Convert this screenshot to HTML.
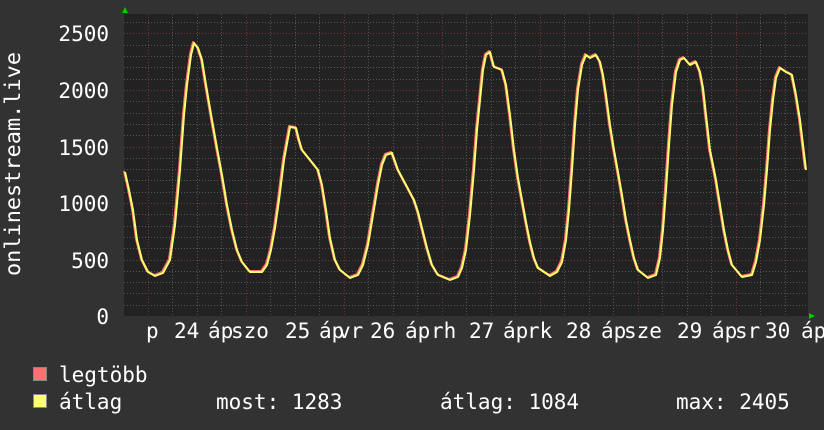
<!DOCTYPE html>
<html><head><meta charset="utf-8"><style>
html,body{margin:0;padding:0;background:#333;}
svg{display:block;}
text{font-family:"DejaVu Sans Mono","Liberation Mono",monospace;fill:#fff;font-size:21px;}
</style></head><body>
<svg width="824" height="430" viewBox="0 0 824 430" xmlns="http://www.w3.org/2000/svg">
<rect x="0" y="0" width="824" height="430" fill="#323232"/>
<rect x="124" y="14" width="684" height="302" fill="#222"/>
<g stroke="#555" stroke-width="1" stroke-dasharray="1,2">
<line x1="124" y1="22.5" x2="808" y2="22.5"/><line x1="124" y1="45.5" x2="808" y2="45.5"/><line x1="124" y1="56.5" x2="808" y2="56.5"/><line x1="124" y1="67.5" x2="808" y2="67.5"/><line x1="124" y1="79.5" x2="808" y2="79.5"/>
<line x1="124" y1="101.5" x2="808" y2="101.5"/><line x1="124" y1="113.5" x2="808" y2="113.5"/><line x1="124" y1="124.5" x2="808" y2="124.5"/><line x1="124" y1="135.5" x2="808" y2="135.5"/>
<line x1="124" y1="158.5" x2="808" y2="158.5"/><line x1="124" y1="169.5" x2="808" y2="169.5"/><line x1="124" y1="180.5" x2="808" y2="180.5"/><line x1="124" y1="192.5" x2="808" y2="192.5"/>
<line x1="124" y1="214.5" x2="808" y2="214.5"/><line x1="124" y1="226.5" x2="808" y2="226.5"/><line x1="124" y1="237.5" x2="808" y2="237.5"/><line x1="124" y1="248.5" x2="808" y2="248.5"/>
<line x1="124" y1="271.5" x2="808" y2="271.5"/><line x1="124" y1="282.5" x2="808" y2="282.5"/><line x1="124" y1="293.5" x2="808" y2="293.5"/><line x1="124" y1="305.5" x2="808" y2="305.5"/>
<line x1="172.5" y1="14" x2="172.5" y2="316"/><line x1="197.5" y1="14" x2="197.5" y2="316"/><line x1="221.5" y1="14" x2="221.5" y2="316"/>
<line x1="270.5" y1="14" x2="270.5" y2="316"/><line x1="295.5" y1="14" x2="295.5" y2="316"/><line x1="319.5" y1="14" x2="319.5" y2="316"/>
<line x1="368.5" y1="14" x2="368.5" y2="316"/><line x1="393.5" y1="14" x2="393.5" y2="316"/><line x1="417.5" y1="14" x2="417.5" y2="316"/>
<line x1="466.5" y1="14" x2="466.5" y2="316"/><line x1="491.5" y1="14" x2="491.5" y2="316"/><line x1="515.5" y1="14" x2="515.5" y2="316"/>
<line x1="564.5" y1="14" x2="564.5" y2="316"/><line x1="589.5" y1="14" x2="589.5" y2="316"/><line x1="613.5" y1="14" x2="613.5" y2="316"/>
<line x1="662.5" y1="14" x2="662.5" y2="316"/><line x1="687.5" y1="14" x2="687.5" y2="316"/><line x1="711.5" y1="14" x2="711.5" y2="316"/>
<line x1="760.5" y1="14" x2="760.5" y2="316"/><line x1="785.5" y1="14" x2="785.5" y2="316"/>
</g>
<g stroke="#7a3333" stroke-width="1" stroke-dasharray="1,2">
<line x1="124" y1="33.5" x2="808" y2="33.5"/><line x1="124" y1="90.5" x2="808" y2="90.5"/><line x1="124" y1="147.5" x2="808" y2="147.5"/><line x1="124" y1="203.5" x2="808" y2="203.5"/><line x1="124" y1="260.5" x2="808" y2="260.5"/>
<line x1="148.5" y1="14" x2="148.5" y2="316"/><line x1="246.5" y1="14" x2="246.5" y2="316"/><line x1="344.5" y1="14" x2="344.5" y2="316"/><line x1="442.5" y1="14" x2="442.5" y2="316"/><line x1="540.5" y1="14" x2="540.5" y2="316"/><line x1="638.5" y1="14" x2="638.5" y2="316"/><line x1="736.5" y1="14" x2="736.5" y2="316"/>
</g>
<polygon points="122,13 128,13 125,7" fill="#0c0"/>
<polygon points="809,313 809,319 815,316" fill="#0c0"/>
<g fill="none" stroke-linejoin="round">
<polyline stroke="#ff7070" stroke-width="2" transform="translate(-1,-1)" points="125,172 129,190 133,210 137,240 142,260 148,272 155,276 163,273 170,260 175,225 180,170 184,115 187,85 191,55 194,43 198,48 202,60 206,85 212,120 217,148 222,175 227,205 232,230 237,250 242,262 250,272 262,272 267,265 271,250 275,228 279,200 284,160 290,127 296,128 299,140 302,150 310,160 318,170 322,185 326,210 330,238 335,260 340,270 350,278 358,275 363,265 368,245 373,215 378,185 382,165 386,155 392,153 398,170 406,185 414,200 418,212 422,228 427,248 432,265 438,275 450,280 458,277 462,268 466,250 470,215 474,170 477,130 480,100 483,70 486,55 490,52 494,67 502,70 506,85 510,115 514,150 518,178 522,200 526,222 530,242 534,258 538,268 550,276 557,272 562,262 566,240 569,210 572,170 575,125 578,90 582,65 586,55 590,58 596,55 600,62 603,75 606,95 610,125 614,150 618,172 622,195 626,220 630,240 634,258 638,270 648,278 656,275 660,258 663,230 666,190 669,145 672,105 676,72 680,60 684,58 690,65 696,62 700,72 703,88 706,115 710,150 716,180 720,205 724,230 728,250 732,265 742,277 752,275 756,262 760,240 764,205 767,170 770,130 773,100 776,78 780,68 786,72 792,75 796,95 800,120 803,145 806,170"/>
<polyline stroke="#ffff70" stroke-width="2" points="125,172 129,190 133,210 137,240 142,260 148,272 155,276 163,273 170,260 175,225 180,170 184,115 187,85 191,55 194,43 198,48 202,60 206,85 212,120 217,148 222,175 227,205 232,230 237,250 242,262 250,272 262,272 267,265 271,250 275,228 279,200 284,160 290,127 296,128 299,140 302,150 310,160 318,170 322,185 326,210 330,238 335,260 340,270 350,278 358,275 363,265 368,245 373,215 378,185 382,165 386,155 392,153 398,170 406,185 414,200 418,212 422,228 427,248 432,265 438,275 450,280 458,277 462,268 466,250 470,215 474,170 477,130 480,100 483,70 486,55 490,52 494,67 502,70 506,85 510,115 514,150 518,178 522,200 526,222 530,242 534,258 538,268 550,276 557,272 562,262 566,240 569,210 572,170 575,125 578,90 582,65 586,55 590,58 596,55 600,62 603,75 606,95 610,125 614,150 618,172 622,195 626,220 630,240 634,258 638,270 648,278 656,275 660,258 663,230 666,190 669,145 672,105 676,72 680,60 684,58 690,65 696,62 700,72 703,88 706,115 710,150 716,180 720,205 724,230 728,250 732,265 742,277 752,275 756,262 760,240 764,205 767,170 770,130 773,100 776,78 780,68 786,72 792,75 796,95 800,120 803,145 806,170"/>
</g>
<g text-anchor="end">
<text x="109" y="41">2500</text><text x="109" y="98">2000</text><text x="109" y="155">1500</text><text x="109" y="211">1000</text><text x="109" y="268">500</text><text x="109" y="324">0</text>
</g>
<text transform="translate(20,276) rotate(-90)" textLength="224" lengthAdjust="spacingAndGlyphs">onlinestream.live</text>
<g>
<text x="146" y="338">p</text><text x="174" y="338">24</text><text x="208" y="338">áp</text>
<text x="231" y="338">szo</text><text x="285" y="338">25</text><text x="319" y="338">áp</text>
<text x="338" y="338">vr</text><text x="370" y="338">26</text><text x="405" y="338">áp</text>
<text x="431" y="338">rh</text><text x="469" y="338">27</text><text x="503" y="338">áp</text>
<text x="527" y="338">rk</text><text x="566" y="338">28</text><text x="601" y="338">áp</text>
<text x="624" y="338">sze</text><text x="677" y="338">29</text><text x="712" y="338">áp</text>
<text x="735" y="338">sr</text><text x="765" y="338">30</text><text x="801" y="338">áp</text>
</g>
<rect x="33.5" y="367.5" width="13" height="13" fill="#ff7070" stroke="#888"/>
<rect x="33.5" y="394.5" width="13" height="13" fill="#ffff70" stroke="#888"/>
<text x="59" y="382">legtöbb</text>
<text x="59" y="409">átlag</text>
<text x="216" y="409">most: 1283</text>
<text x="440" y="409">átlag: 1084</text>
<text x="676" y="409">max: 2405</text>
</svg>
</body></html>
